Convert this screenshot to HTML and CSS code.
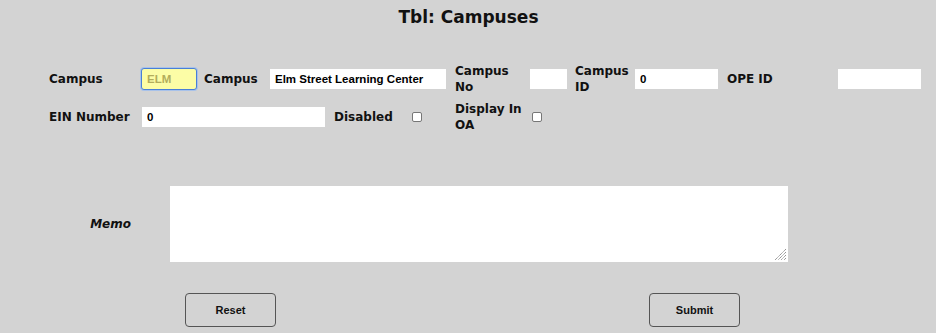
FILE: index.html
```html
<!DOCTYPE html>
<html>
<head>
<meta charset="utf-8">
<link rel="stylesheet" href="styles.css">
</head>
<body>
<h1 class="title">Tbl: Campuses</h1>
<form class="form">
  <div class="row row1">
    <label class="lbl w92">Campus</label>
    <input class="fld code" type="text" value="ELM" style="width:56px">
    <label class="lbl w66 ml7">Campus</label>
    <input class="fld" type="text" value="Elm Street Learning Center" style="width:176px">
    <label class="lbl two w75 ml9">Campus No</label>
    <input class="fld" type="text" value="" style="width:37px">
    <label class="lbl two w60 ml8">Campus ID</label>
    <input class="fld" type="text" value="0" style="width:83px">
    <label class="lbl w111 ml9">OPE ID</label>
    <input class="fld" type="text" value="" style="width:83px">
  </div>
  <div class="row row2">
    <label class="lbl w93">EIN Number</label>
    <input class="fld" type="text" value="0" style="width:183px">
    <label class="lbl w78 ml9">Disabled</label>
    <span class="chk"></span>
    <label class="lbl two w77 ml33">Display In OA</label>
    <span class="chk"></span>
  </div>
  <div class="memo-row">
    <label class="lbl memo-lbl">Memo</label>
    <div class="memo">
      <svg class="grip" width="13" height="13" viewBox="0 0 13 13">
        <path d="M12 1 L1 12 M12 4 L4 12 M12 7 L7 12 M12 10 L10 12" stroke="#8a8a8a" stroke-width="1" stroke-dasharray="1.3 0.5" fill="none"/>
      </svg>
    </div>
  </div>
  <div class="btn-row">
    <button type="button" class="btn">Reset</button>
    <button type="button" class="btn submit">Submit</button>
  </div>
</form>
</body>
</html>
```

FILE: styles.css
```css
html, body {
  margin: 0;
  padding: 0;
  background: #d3d3d3;
}
body {
  width: 936px;
  height: 333px;
  overflow: hidden;
  font-family: "DejaVu Sans", "Liberation Sans", sans-serif;
  color: #111;
}
.title {
  margin: 0;
  padding-top: 6px;
  text-align: center;
  font-size: 17px;
  line-height: 22px;
  font-weight: bold;
  padding-left: 1px;
}
.form {
  padding-left: 49px;
}
.row {
  display: flex;
  align-items: center;
}
.row1 {
  margin-top: 34px;
  height: 34px;
}
.row2 {
  margin-top: 4px;
  height: 34px;
}
.lbl {
  font-size: 12px;
  font-weight: bold;
  line-height: 16px;
  color: #111;
  flex: none;
}
.w92 { width: 92px; }
.w93 { width: 93px; }
.w66 { width: 66px; }
.w75 { width: 75px; }
.w60 { width: 60px; }
.w111 { width: 111px; }
.w78 { width: 78px; }
.w77 { width: 77px; }
.ml7 { margin-left: 7px; }
.ml8 { margin-left: 8px; }
.ml9 { margin-left: 9px; }
.ml33 { margin-left: 33px; }
.fld {
  box-sizing: border-box;
  height: 20px;
  border: none;
  background: #fff;
  padding: 0 5px;
  font-family: "Liberation Sans", sans-serif;
  font-size: 11.5px;
  font-weight: bold;
  color: #000;
  flex: none;
  outline: none;
}
.fld.code {
  height: 22px;
  background: #fcfda6;
  color: #b3ad5c;
  border: 1px solid #4a7fd6;
  border-radius: 3px;
  box-shadow: 0 0 0 1px #a8c2ea;
  padding-left: 5px;
}
.chk {
  flex: none;
  box-sizing: border-box;
  width: 10px;
  height: 10px;
  border: 1px solid #767676;
  border-radius: 2px;
  background: #fff;
}
.memo-row {
  display: flex;
  align-items: center;
  margin-top: 52px;
}
.memo-lbl {
  width: 82px;
  text-align: right;
  font-style: italic;
}
.memo {
  position: relative;
  margin-left: 39px;
  width: 618px;
  height: 76px;
  background: #fff;
}
.grip {
  position: absolute;
  right: 1px;
  bottom: 1px;
}
.btn-row {
  display: flex;
  margin-top: 31px;
  padding-left: 136px;
}
.btn {
  box-sizing: border-box;
  width: 91px;
  height: 34px;
  border: 1px solid #555;
  border-radius: 4px;
  background: #d3d3d3;
  font-family: "Liberation Sans", sans-serif;
  font-size: 11px;
  font-weight: bold;
  color: #111;
  padding: 0;
}
.submit {
  margin-left: 373px;
}
```
